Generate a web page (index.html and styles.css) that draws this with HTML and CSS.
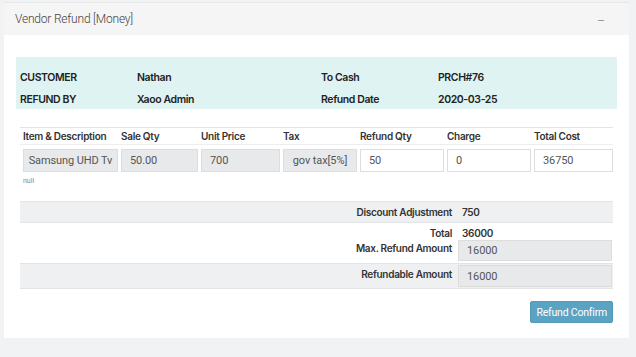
FILE: index.html
```
<!DOCTYPE html>
<html lang="en">
<head>
    <meta charset="UTF-8">
    <title>Vendor Refund</title>
    <link rel="stylesheet" href="styles.css">
</head>
<body>
    <div class="panel">
        <div class="panel-head">
            <span class="panel-title">Vendor Refund [Money]</span>
            <span class="collapse">&ndash;</span>
        </div>
        <div class="panel-body">
            <div class="info">
                <span class="lbl">CUSTOMER</span>
                <span>Nathan</span>
                <span>To Cash</span>
                <span>PRCH#76</span>
                <span class="lbl">REFUND BY</span>
                <span>Xaoo Admin</span>
                <span>Refund Date</span>
                <span>2020-03-25</span>
            </div>

            <div class="items">
                <div class="items-head">
                    <span>Item &amp; Description</span>
                    <span>Sale Qty</span>
                    <span>Unit Price</span>
                    <span>Tax</span>
                    <span>Refund Qty</span>
                    <span>Charge</span>
                    <span>Total Cost</span>
                </div>
                <div class="items-row">
                    <input class="ro center" type="text" value="Samsung UHD Tv" readonly>
                    <input class="ro" type="text" value="50.00" readonly>
                    <input class="ro" type="text" value="700" readonly>
                    <input class="ro center" type="text" value="gov tax[5%]" readonly>
                    <input type="text" value="50">
                    <input type="text" value="0">
                    <input type="text" value="36750">
                </div>
                <p class="note">null</p>
            </div>

            <div class="summary">
                <div class="sum-row shade">
                    <span class="sum-lbl">Discount Adjustment</span>
                    <span class="sum-val">750</span>
                </div>
                <div class="sum-row tall">
                    <div class="sum-lbl stack">
                        <span>Total</span>
                        <span>Max. Refund Amount</span>
                    </div>
                    <div class="sum-val stack">
                        <span>36000</span>
                        <input class="ro" type="text" value="16000" readonly>
                    </div>
                </div>
                <div class="sum-row shade">
                    <span class="sum-lbl">Refundable Amount</span>
                    <div class="sum-val">
                        <input class="ro" type="text" value="16000" readonly>
                    </div>
                </div>
            </div>

            <div class="actions">
                <button>Refund Confirm</button>
            </div>
        </div>
    </div>
</body>
</html>
```
FILE: styles.css
```
body {
    margin: 0;
    padding: 2px 7px 19px 4px;
    background: #f1f2f3;
    font-family: 'Inter', 'Roboto', sans-serif;
    color: #333;
}

.panel {
    background: #fff;
    border-top: 1px solid #e6e7e8;
}

.panel-head {
    height: 32px;
    background: #f5f5f5;
    display: flex;
    align-items: center;
    justify-content: space-between;
    padding: 0 25px 0 11px;
}

.panel-title {
    font-family: 'Roboto', sans-serif;
    font-size: 12px;
    font-weight: 300;
    color: #444;
    letter-spacing: -0.2px;
}

.collapse {
    color: #999;
    font-size: 12px;
}

.panel-body {
    padding: 22px 12px 15px 12px;
}

.info {
    background: #dff3f3;
    display: grid;
    grid-template-columns: 117px 184px 117px 1fr;
    row-gap: 9px;
    padding: 14px 4px 3px 4px;
    font-size: 10.5px;
    font-weight: 600;
    color: #222;
    letter-spacing: -0.4px;
}

.items {
    margin: 18px 4px 0 4px;
    border-top: 1px solid #e4e4e4;
}

.items-head,
.items-row {
    display: grid;
    grid-template-columns: 95px 77px 79px 74px 84px 84px 79px;
    column-gap: 3px;
    padding-left: 3px;
}

.items-head {
    font-size: 10px;
    line-height: 12px;
    font-weight: 600;
    color: #333;
    letter-spacing: -0.3px;
    padding-top: 2px;
    padding-bottom: 2px;
    border-bottom: 1px solid #eee;
}

.items-row {
    padding-top: 4px;
}

input {
    box-sizing: border-box;
    height: 23px;
    width: 100%;
    border: 1px solid #ddd;
    background: #fff;
    font-family: 'Roboto', sans-serif;
    font-size: 11px;
    color: #555;
    padding: 0 8px;
    margin: 0;
    letter-spacing: -0.1px;
}

input.ro {
    background: #e8e9ea;
}

input.center {
    text-align: center;
    padding: 0 2px;
}

.note {
    margin: 5px 0 0 3px;
    font-family: 'Roboto', sans-serif;
    font-size: 7px;
    line-height: 9px;
    color: #888;
}

.summary {
    margin: 15px 4px 0 4px;
    border-bottom: 1px solid #e4e4e4;
    font-size: 10px;
    line-height: 12px;
    font-weight: 600;
    letter-spacing: -0.3px;
    color: #333;
}

.sum-row {
    display: grid;
    grid-template-columns: 432px 1fr;
    column-gap: 10px;
    border-top: 1px solid #e2e4e6;
}

.sum-row.shade {
    background: #eef0f2;
}

.sum-lbl,
.sum-val {
    padding: 4px 0;
}

.sum-lbl {
    text-align: right;
}

.stack {
    display: flex;
    flex-direction: column;
}

.sum-lbl.stack {
    align-items: flex-end;
    gap: 3px;
}

.sum-val.stack {
    gap: 1px;
    padding-bottom: 2px;
}

.sum-val input {
    width: 154px;
    height: 21px;
    margin-left: -4px;
}

.sum-row.shade .sum-val:has(input) {
    padding: 1px 0;
}

.sum-row.shade input {
    height: 22px;
}

.actions {
    display: flex;
    justify-content: flex-end;
    margin: 12px 4px 0 0;
}

button {
    background: #5ba3c3;
    border: 1px solid #5399b8;
    color: #fff;
    font-family: 'Roboto', sans-serif;
    font-size: 10.5px;
    letter-spacing: -0.2px;
    padding: 0 5px;
    height: 22px;
    border-radius: 2px;
}
```
